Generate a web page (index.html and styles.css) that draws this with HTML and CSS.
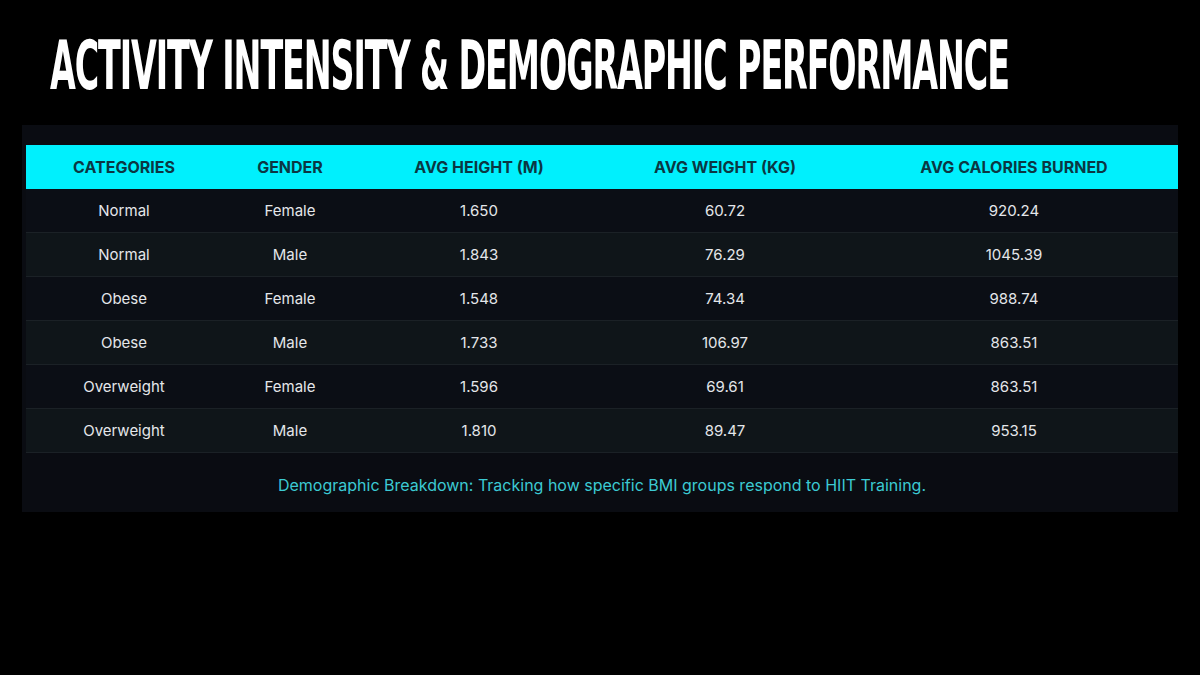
FILE: index.html
```html
<!DOCTYPE html>
<html>
<head>
<meta charset="utf-8">
<link rel="stylesheet" href="styles.css">
</head>
<body>
<div class="slide">
  <h1 class="title">ACTIVITY INTENSITY &amp; DEMOGRAPHIC PERFORMANCE</h1>
  <div class="panel">
    <table class="data">
      <colgroup>
        <col class="c1"><col class="c2"><col class="c3"><col class="c4"><col class="c5">
      </colgroup>
      <thead>
        <tr><th>CATEGORIES</th><th>GENDER</th><th>AVG HEIGHT (M)</th><th>AVG WEIGHT (KG)</th><th>AVG CALORIES BURNED</th></tr>
      </thead>
      <tbody>
        <tr><td>Normal</td><td>Female</td><td>1.650</td><td>60.72</td><td>920.24</td></tr>
        <tr><td>Normal</td><td>Male</td><td>1.843</td><td>76.29</td><td>1045.39</td></tr>
        <tr><td>Obese</td><td>Female</td><td>1.548</td><td>74.34</td><td>988.74</td></tr>
        <tr><td>Obese</td><td>Male</td><td>1.733</td><td>106.97</td><td>863.51</td></tr>
        <tr><td>Overweight</td><td>Female</td><td>1.596</td><td>69.61</td><td>863.51</td></tr>
        <tr><td>Overweight</td><td>Male</td><td>1.810</td><td>89.47</td><td>953.15</td></tr>
      </tbody>
    </table>
    <p class="caption">Demographic Breakdown: Tracking how specific BMI groups respond to HIIT Training.</p>
  </div>
</div>
</body>
</html>
```
FILE: styles.css
```css
html, body {
  margin: 0;
  padding: 0;
  background: #000;
}
.slide {
  width: 1200px;
  height: 675px;
  background: #000;
  padding: 0 22px;
  box-sizing: border-box;
  display: flex;
  flex-direction: column;
  overflow: hidden;
}
.title {
  margin: 28px 0 0 28px;
  font-family: "DejaVu Sans Condensed", "DejaVu Sans", sans-serif;
  font-weight: 700;
  font-size: 68px;
  line-height: 76px;
  color: #fff;
  letter-spacing: -2px;
  transform: scaleX(0.545);
  transform-origin: left center;
  white-space: nowrap;
}
.panel {
  margin-top: 21px;
  background: #0a0c12;
  padding: 20px 0 0 4px;
  height: 387px;
  box-sizing: border-box;
}
.data {
  width: 100%;
  border-collapse: collapse;
  font-family: Inter, "Noto Sans", sans-serif;
  text-align: center;
}
.c1 { width: 196px; }
.c2 { width: 136px; }
.c3 { width: 242px; }
.c4 { width: 250px; }
.data th {
  background: #00f0fd;
  color: #0b3743;
  font-weight: 700;
  font-size: 16px;
  height: 44px;
  padding: 0;
}
.data td {
  color: #e4e6ea;
  font-size: 15px;
  height: 43px;
  padding: 0;
  border-bottom: 1px solid #1b2126;
}
.data tbody tr:nth-child(odd) td { background: #0b0e15; }
.data tbody tr:nth-child(even) td { background: #0f1519; }
.caption {
  margin: 22px 0 0 0;
  text-align: center;
  font-family: Inter, "Noto Sans", sans-serif;
  font-size: 16px;
  color: #3ccad3;
}
```
